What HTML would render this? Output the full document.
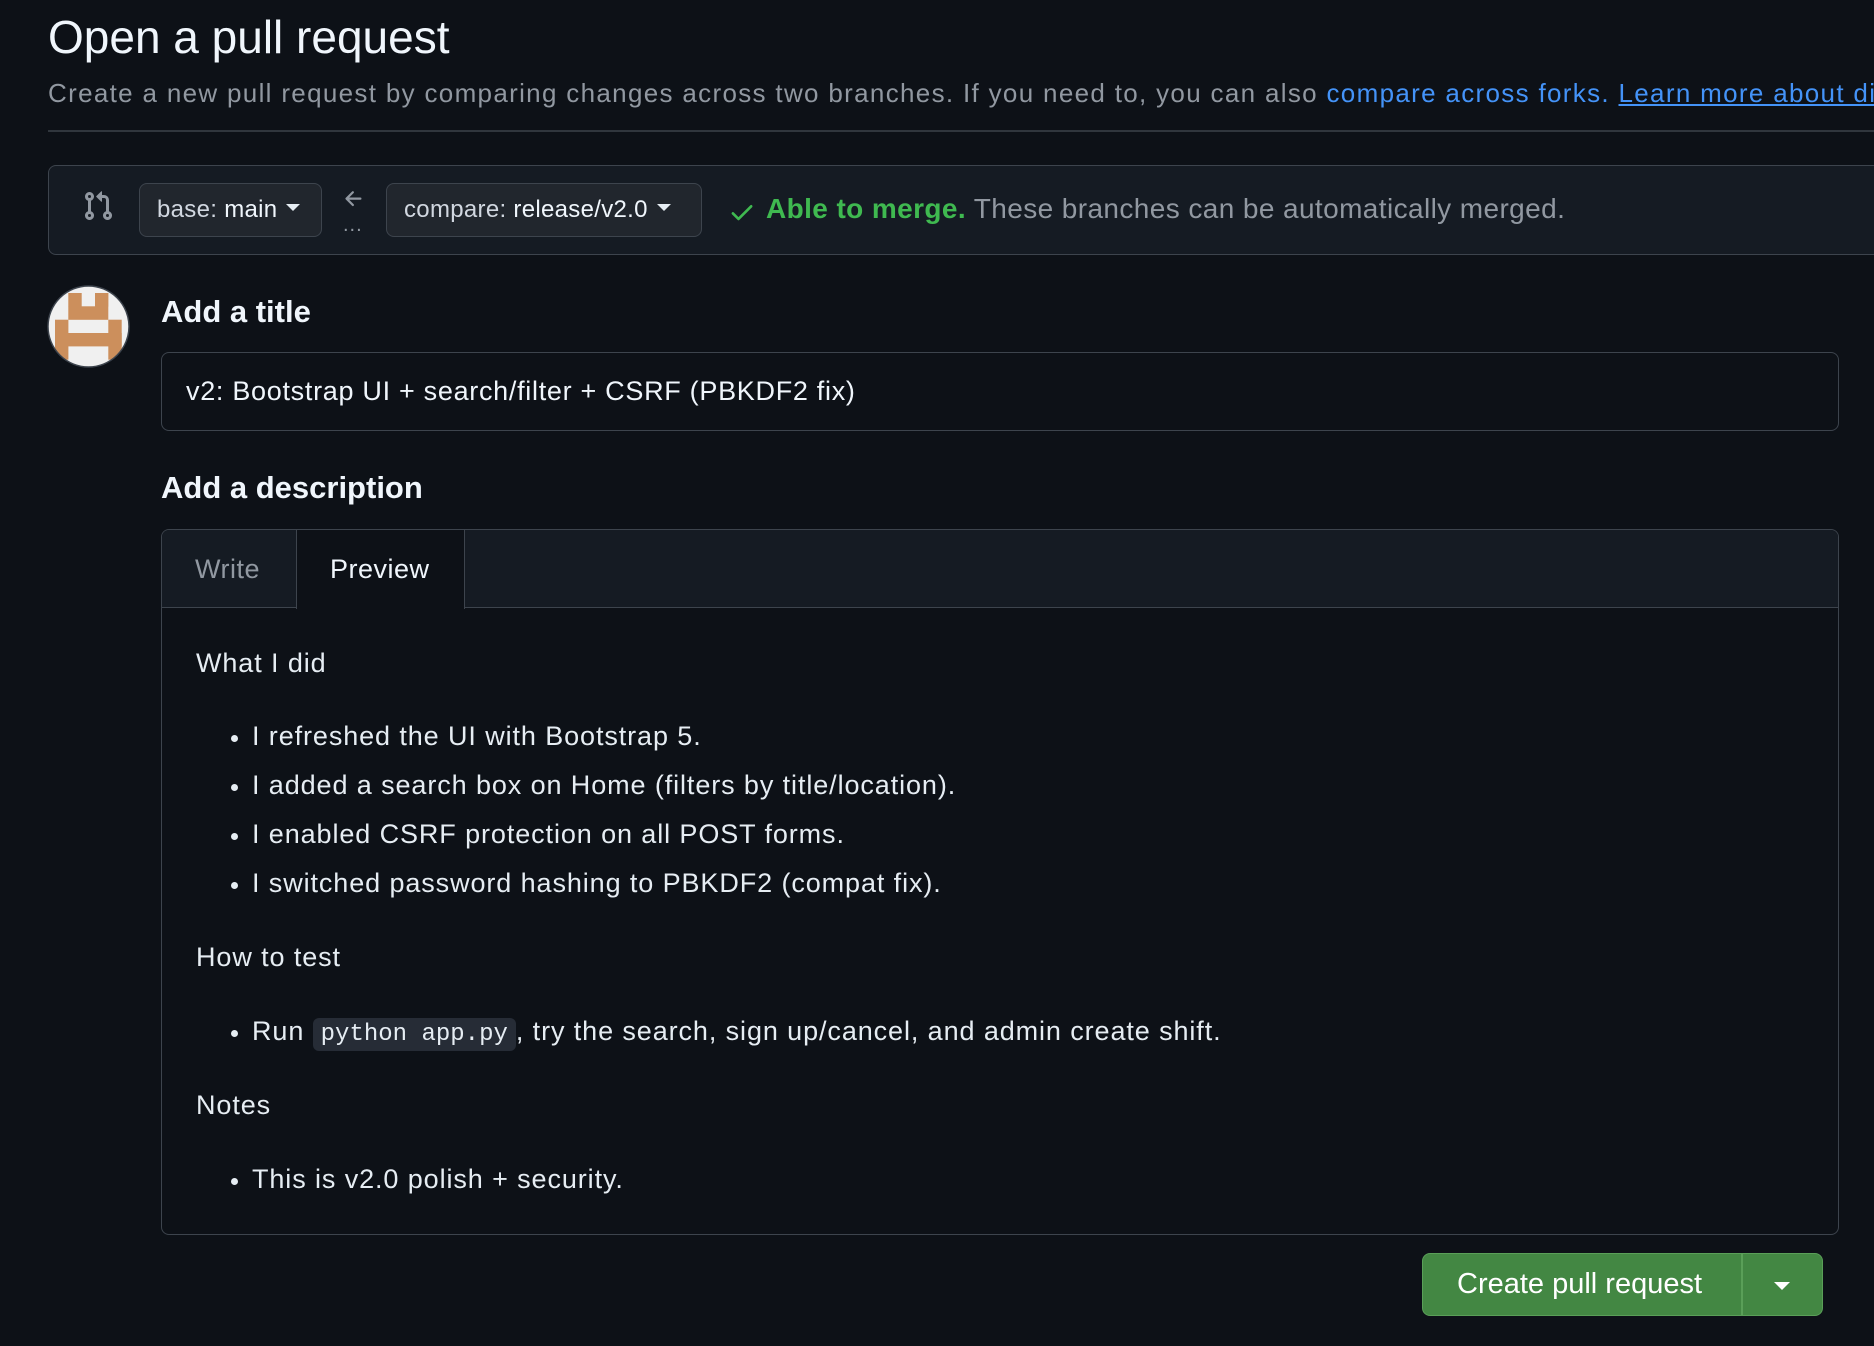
<!DOCTYPE html>
<html><head><meta charset="utf-8"><style>
*{box-sizing:border-box;margin:0;padding:0}
html,body{overflow:hidden}
body{width:1874px;height:1346px;background:#0d1117;color:#e6edf3;font-family:"Liberation Sans",sans-serif;position:relative}
.a{position:absolute;white-space:nowrap}
.btn{position:absolute;background:#21262d;border:1.5px solid #3d444d;border-radius:8px;color:#d1d7e0;font-size:24px;display:flex;align-items:center;padding-left:17px;letter-spacing:0.3px}
.caret{display:inline-block;width:0;height:0;border-left:7px solid transparent;border-right:7px solid transparent;border-top:7px solid #e6edf3;margin-left:9px;margin-top:-6px}
.li{position:absolute;left:231px;font-size:27px;color:#e6edf3;white-space:nowrap;letter-spacing:0.9px}
.li:before{content:"";position:absolute;left:0;top:14px;width:7px;height:7px;border-radius:50%;background:#e6edf3}
.li span.t{margin-left:21px}
.p{position:absolute;left:196px;font-size:27px;color:#e6edf3;letter-spacing:0.9px}
</style></head><body>
<div class="a" style="left:48px;top:10px;font-size:46px;color:#f0f6fc">Open a pull request</div>
<div style="position:absolute;left:0;top:0;width:1874px;height:130px;overflow:hidden"><div class="a" style="left:48px;top:78px;font-size:26px;color:#9198a1;letter-spacing:1.32px">Create a new pull request by comparing changes across two branches. If you need to, you can also <span style="color:#4493f8">compare across forks.</span> <span style="color:#4493f8;text-decoration:underline">Learn more about diff</span></div></div>
<div class="a" style="left:48px;top:130px;width:1826px;height:2px;background:#30363d"></div>
<div class="a" style="left:48px;top:165px;width:1840px;height:90px;background:#151b23;border:1.5px solid #3d444d;border-radius:8px"></div>
<svg class="a" style="left:82px;top:190px" width="32" height="32" viewBox="0 0 16 16" fill="#9198a1"><path d="M1.5 3.25a2.25 2.25 0 1 1 3 2.122v5.256a2.251 2.251 0 1 1-1.5 0V5.372A2.25 2.25 0 0 1 1.5 3.25Zm5.677-.177L9.573.677A.25.25 0 0 1 10 .854V2.5h1A2.5 2.5 0 0 1 13.5 5v5.628a2.251 2.251 0 1 1-1.5 0V5a1 1 0 0 0-1-1h-1v1.646a.25.25 0 0 1-.427.177L7.177 3.427a.25.25 0 0 1 0-.354ZM3.750 2.5a.75.75 0 1 0 0 1.5.75.75 0 0 0 0-1.5Zm0 9.5a.75.75 0 1 0 0 1.5.75.75 0 0 0 0-1.5Zm8.25.75a.75.75 0 1 0 1.5 0 .75.75 0 0 0-1.5 0Z"/></svg>
<div class="btn" style="left:139px;top:183px;width:183px;height:54px">base:&nbsp;<span style="color:#f0f6fc">main</span><span class="caret"></span></div>
<svg class="a" style="left:342px;top:187px" width="24" height="24" viewBox="0 0 16 16" fill="#9198a1"><path d="M7.78 12.53a.75.75 0 0 1-1.06 0L2.47 8.28a.75.75 0 0 1 0-1.06l4.25-4.25a.751.751 0 0 1 1.06 1.06L4.81 7h7.44a.75.75 0 0 1 0 1.5H4.81l2.97 2.97a.75.75 0 0 1 0 1.06Z"/></svg>
<div class="a" style="left:343px;top:214px;font-size:20px;color:#9198a1;letter-spacing:1px">...</div>
<div class="btn" style="left:386px;top:183px;width:316px;height:54px">compare:&nbsp;<span style="color:#f0f6fc">release/v2.0</span><span class="caret"></span></div>
<svg class="a" style="left:728px;top:198px" width="28" height="28" viewBox="0 0 16 16" fill="#3fb950"><path d="M13.78 4.22a.75.75 0 0 1 0 1.06l-7.25 7.25a.75.75 0 0 1-1.06 0L2.22 9.28a.751.751 0 0 1 1.06-1.06L6 10.94l6.72-6.72a.75.75 0 0 1 1.06 0Z"/></svg>
<div class="a" style="left:766px;top:193px;font-size:28px;color:#9198a1;letter-spacing:0.4px"><b style="color:#3fb950">Able to merge.</b> These branches can be automatically merged.</div>
<svg class="a" style="left:47px;top:285px" width="83" height="83" viewBox="0 0 83 83"><defs><clipPath id="c"><circle cx="41.5" cy="41.5" r="40.5"/></clipPath></defs><g clip-path="url(#c)"><rect width="83" height="83" fill="#f0f0f0"/><g fill="#cc8f5c"><rect x="21.3" y="8" width="13.4" height="13.5"/><rect x="48" y="8" width="13.4" height="13.5"/><rect x="21.3" y="21.3" width="40" height="13.5"/><rect x="8" y="34.7" width="13.4" height="40"/><rect x="61.3" y="34.7" width="13.4" height="40"/><rect x="8" y="48" width="66.7" height="13.4"/></g></g><circle cx="41.5" cy="41.5" r="40.5" fill="none" stroke="#3d444d" stroke-width="1.5"/></svg>
<div class="a" style="left:161px;top:294px;font-size:31px;font-weight:bold;color:#f0f6fc">Add a title</div>
<div class="a" style="left:161px;top:352px;width:1678px;height:79px;border:1.5px solid #3d444d;border-radius:8px;background:#0d1117"></div>
<div class="a" style="left:186px;top:376px;font-size:27px;color:#f0f6fc;letter-spacing:0.7px">v2: Bootstrap UI + search/filter + CSRF (PBKDF2 fix)</div>
<div class="a" style="left:161px;top:470px;font-size:31px;font-weight:bold;color:#f0f6fc">Add a description</div>
<div class="a" style="left:161px;top:529px;width:1678px;height:706px;border:1.5px solid #3d444d;border-radius:8px"></div>
<div class="a" style="left:162px;top:530px;width:1676px;height:78px;background:#151b23;border-bottom:1.5px solid #3d444d;border-radius:7px 7px 0 0"></div>
<div class="a" style="left:296px;top:530px;width:169px;height:79px;background:#0d1117;border-left:1.5px solid #3d444d;border-right:1.5px solid #3d444d"></div>
<div class="a" style="left:195px;top:554px;font-size:27px;color:#9198a1;letter-spacing:0.5px">Write</div>
<div class="a" style="left:330px;top:554px;font-size:27px;color:#f0f6fc;letter-spacing:0.5px">Preview</div>
<div class="p" style="top:648px">What I did</div>
<div class="li" style="top:721px"><span class="t">I refreshed the UI with Bootstrap 5.</span></div>
<div class="li" style="top:770px"><span class="t">I added a search box on Home (filters by title/location).</span></div>
<div class="li" style="top:819px"><span class="t">I enabled CSRF protection on all POST forms.</span></div>
<div class="li" style="top:868px"><span class="t">I switched password hashing to PBKDF2 (compat fix).</span></div>
<div class="p" style="top:942px">How to test</div>
<div class="li" style="top:1016px"><span class="t">Run <span style="font-family:'Liberation Mono',monospace;font-size:24px;letter-spacing:0;background:#262c36;border-radius:6px;padding:3px 8px">python app.py</span>, try the search, sign up/cancel, and admin create shift.</span></div>
<div class="p" style="top:1090px">Notes</div>
<div class="li" style="top:1164px"><span class="t">This is v2.0 polish + security.</span></div>
<div class="a" style="left:1422px;top:1253px;width:401px;height:63px;background:#438743;border:1.5px solid #5a9f58;border-radius:8px"></div>
<div class="a" style="left:1741px;top:1254px;width:1.5px;height:61px;background:#5a9f58"></div>
<div class="a" style="left:1457px;top:1268px;font-size:29px;color:#fff">Create pull request</div>
<div class="a" style="left:1774px;top:1282px;width:0;height:0;border-left:8px solid transparent;border-right:8px solid transparent;border-top:8px solid #fff"></div>
</body></html>
